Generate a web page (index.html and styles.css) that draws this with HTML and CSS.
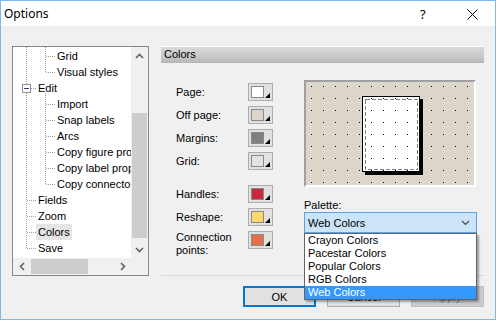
FILE: index.html
```html
<!DOCTYPE html>
<html>
<head>
<meta charset="utf-8">
<link rel="stylesheet" href="styles.css">
</head>
<body>
<div class="window">
  <div class="titlebar">
    <span class="title">Options</span>
    <span class="help">?</span>
    <span class="close"><svg width="11" height="11" viewBox="0 0 11 11"><path d="M0.5 0.5 L10.5 10.5 M10.5 0.5 L0.5 10.5" stroke="#000" stroke-width="1"/></svg></span>
  </div>
  <div class="body">
    <div class="main">
      <div class="tree">
        <div class="tree-top">
          <div class="tree-content">
            <svg class="tree-lines" width="118" height="211" viewBox="0 0 118 211" shape-rendering="crispEdges">
              <g stroke="#a0a0a0" stroke-width="1" stroke-dasharray="1 1" fill="none">
                <line x1="13.5" y1="0" x2="13.5" y2="202"/>
                <line x1="32.5" y1="0" x2="32.5" y2="26"/>
                <line x1="33" y1="9.5" x2="42" y2="9.5"/>
                <line x1="33" y1="25.5" x2="42" y2="25.5"/>
                <line x1="18" y1="41.5" x2="24" y2="41.5"/>
                <line x1="32.5" y1="46" x2="32.5" y2="138"/>
                <line x1="33" y1="57.5" x2="42" y2="57.5"/>
                <line x1="33" y1="73.5" x2="42" y2="73.5"/>
                <line x1="33" y1="89.5" x2="42" y2="89.5"/>
                <line x1="33" y1="105.5" x2="42" y2="105.5"/>
                <line x1="33" y1="121.5" x2="42" y2="121.5"/>
                <line x1="33" y1="137.5" x2="42" y2="137.5"/>
                <line x1="14" y1="153.5" x2="23" y2="153.5"/>
                <line x1="14" y1="169.5" x2="23" y2="169.5"/>
                <line x1="14" y1="185.5" x2="23" y2="185.5"/>
                <line x1="14" y1="201.5" x2="23" y2="201.5"/>
              </g>
              <rect x="9.5" y="37.5" width="8" height="8" fill="#fff" stroke="#919191"/>
              <line x1="11" y1="41.5" x2="16" y2="41.5" stroke="#2b3f8f" stroke-width="1"/>
            </svg>
            <div class="row l2"><span class="lbl">Grid</span></div>
            <div class="row l2"><span class="lbl">Visual styles</span></div>
            <div class="row l1"><span class="lbl">Edit</span></div>
            <div class="row l2"><span class="lbl">Import</span></div>
            <div class="row l2"><span class="lbl">Snap labels</span></div>
            <div class="row l2"><span class="lbl">Arcs</span></div>
            <div class="row l2"><span class="lbl">Copy figure properties</span></div>
            <div class="row l2"><span class="lbl">Copy label properties</span></div>
            <div class="row l2"><span class="lbl">Copy connector properties</span></div>
            <div class="row l1"><span class="lbl">Fields</span></div>
            <div class="row l1"><span class="lbl">Zoom</span></div>
            <div class="row l1"><span class="lbl sel">Colors</span></div>
            <div class="row l1"><span class="lbl">Save</span></div>
          </div>
          <div class="vscroll">
            <div class="sbtn"><svg width="9" height="6" viewBox="0 0 9 6"><path d="M1 5 L4.5 1.5 L8 5" stroke="#606060" stroke-width="1.6" fill="none"/></svg></div>
            <div class="vtrack"><div class="vthumb"></div></div>
            <div class="sbtn"><svg width="9" height="6" viewBox="0 0 9 6"><path d="M1 1 L4.5 4.5 L8 1" stroke="#606060" stroke-width="1.6" fill="none"/></svg></div>
          </div>
        </div>
        <div class="tree-bottom">
          <div class="hscroll">
            <div class="sbtn"><svg width="6" height="9" viewBox="0 0 6 9"><path d="M5 1 L1.5 4.5 L5 8" stroke="#606060" stroke-width="1.6" fill="none"/></svg></div>
            <div class="htrack"><div class="hthumb"></div></div>
            <div class="sbtn"><svg width="6" height="9" viewBox="0 0 6 9"><path d="M1 1 L4.5 4.5 L1 8" stroke="#606060" stroke-width="1.6" fill="none"/></svg></div>
          </div>
          <div class="corner"></div>
        </div>
      </div>
      <div class="panel">
        <div class="panel-header">Colors</div>
        <div class="panel-body">
          <div class="swatches">
            <div class="srow"><span class="slabel">Page:</span><span class="swatch"><span class="chip c-page"></span><span class="tri"></span></span></div>
            <div class="srow"><span class="slabel">Off page:</span><span class="swatch"><span class="chip c-off"></span><span class="tri"></span></span></div>
            <div class="srow"><span class="slabel">Margins:</span><span class="swatch"><span class="chip c-margins"></span><span class="tri"></span></span></div>
            <div class="srow"><span class="slabel">Grid:</span><span class="swatch"><span class="chip c-grid"></span><span class="tri"></span></span></div>
            <div class="srow group"><span class="slabel">Handles:</span><span class="swatch"><span class="chip c-handles"></span><span class="tri"></span></span></div>
            <div class="srow"><span class="slabel">Reshape:</span><span class="swatch"><span class="chip c-reshape"></span><span class="tri"></span></span></div>
            <div class="srow"><span class="slabel two">Connection<br>points:</span><span class="swatch"><span class="chip c-conn"></span><span class="tri"></span></span></div>
          </div>
          <div class="preview-col">
            <div class="preview">
              <svg width="168" height="103" viewBox="0 0 168 103" shape-rendering="crispEdges">
                <defs>
                  <pattern id="dots" width="12" height="12" patternUnits="userSpaceOnUse">
                    <rect x="5" y="4" width="1" height="1" fill="#000"/>
                  </pattern>
                </defs>
                <rect x="59" y="17" width="58" height="76" fill="#000"/>
                <rect x="56.5" y="14.5" width="57" height="75" fill="#fff" stroke="#000"/>
                <rect x="59.5" y="17.5" width="52" height="70" fill="none" stroke="#808080" stroke-dasharray="4 2"/>
                <rect x="0" y="0" width="168" height="103" fill="url(#dots)"/>
              </svg>
            </div>
            <div class="palette-label">Palette:</div>
            <div class="combo">
              <span class="combo-text">Web Colors</span>
              <svg class="chev" width="9" height="6" viewBox="0 0 9 6"><path d="M1 1 L4.5 4.5 L8 1" stroke="#444" stroke-width="1.1" fill="none"/></svg>
              <ul class="combo-list">
                <li>Crayon Colors</li>
                <li>Pacestar Colors</li>
                <li>Popular Colors</li>
                <li>RGB Colors</li>
                <li class="on">Web Colors</li>
              </ul>
            </div>
          </div>
        </div>
      </div>
    </div>
    <div class="buttons">
      <button class="btn default">OK</button>
      <button class="btn">Cancel</button>
      <button class="btn disabled">Apply</button>
    </div>
  </div>
</div>
</body>
</html>
```

FILE: styles.css
```css
* { box-sizing: border-box; }
html, body { margin: 0; padding: 0; }
body {
  width: 496px;
  height: 320px;
  overflow: hidden;
  font-family: "Liberation Sans", Arial, sans-serif;
  font-size: 11px;
  color: #000;
}
.window {
  width: 496px;
  height: 320px;
  border: 1px solid #7db8ee;
  background: #f0f0f0;
  display: flex;
  flex-direction: column;
}
.titlebar {
  height: 25px;
  background: #fff;
  display: flex;
  align-items: center;
  flex: none;
}
.title {
  font-family: "Noto Sans", sans-serif;
  font-size: 12px;
  padding-left: 3px;
  flex: 1;
}
.help {
  font-family: "Noto Sans", sans-serif;
  font-size: 13px;
  width: 12px;
  margin-right: 35px;
}
.close {
  width: 11px;
  height: 11px;
  display: flex;
  margin-right: 17px;
  margin-top: 1px;
}
.body {
  flex: 1;
  padding: 20px 11px 0 11px;
  display: flex;
  flex-direction: column;
}
.main {
  display: flex;
  gap: 12px;
  height: 230px;
}
.tree {
  width: 137px;
  height: 230px;
  border: 1px solid #828790;
  background: #fff;
  display: flex;
  flex-direction: column;
}
.tree-top {
  display: flex;
  height: 211px;
}
.tree-content {
  position: relative;
  width: 118px;
  height: 211px;
  overflow: hidden;
  padding-top: 1px;
  white-space: nowrap;
}
.tree-lines {
  position: absolute;
  left: 0;
  top: 0;
}
.row {
  position: relative;
  height: 16px;
  display: flex;
  align-items: center;
}
.row.l1 { padding-left: 23px; }
.row.l2 { padding-left: 42px; }
.lbl {
  padding: 0 2px;
  line-height: 16px;
  height: 16px;
}
.lbl.sel { background: #e5e5e5; }
.vscroll {
  width: 17px;
  height: 211px;
  background: #f0f0f0;
  display: flex;
  flex-direction: column;
}
.sbtn {
  width: 17px;
  height: 17px;
  flex: none;
  display: flex;
  align-items: center;
  justify-content: center;
}
.vtrack {
  flex: 1;
  padding-top: 49px;
}
.vthumb {
  margin-left: 1px;
  width: 15px;
  height: 125px;
  background: #cdcdcd;
}
.tree-bottom {
  display: flex;
  height: 17px;
}
.hscroll {
  width: 118px;
  height: 17px;
  background: #f0f0f0;
  display: flex;
}
.htrack {
  flex: 1;
  padding-top: 1px;
}
.hthumb {
  width: 57px;
  height: 15px;
  margin-left: 1px;
  background: #cdcdcd;
}
.corner {
  width: 17px;
  height: 17px;
  background: #f0f0f0;
}
.panel {
  flex: 1;
  height: 230px;
  border-bottom: 1px solid #d9d9d9;
  display: flex;
  flex-direction: column;
}
.panel-header {
  height: 17px;
  border-top: 1px solid #fff;
  background: linear-gradient(#dadada, #c4c4c4 70%, #b6b6b6);
  padding-left: 3px;
  line-height: 15px;
}
.panel-body {
  display: flex;
  padding-left: 15px;
  align-items: flex-start;
}
.swatches {
  padding-top: 20px;
  display: flex;
  flex-direction: column;
  gap: 5px;
}
.srow {
  display: flex;
  align-items: flex-start;
  height: 18px;
}
.srow.group { margin-top: 10px; }
.slabel {
  width: 72px;
  line-height: 18px;
}
.slabel.two { line-height: 13px; }
.swatch {
  position: relative;
  width: 25px;
  height: 18px;
  border: 1px solid #adadad;
  background: #e1e1e1;
  padding: 2px 0 0 2px;
}
.chip {
  display: block;
  width: 13px;
  height: 12px;
  border: 1px solid #8a8a8a;
}
.c-page { background: #fff; }
.c-off { background: #ddd6cb; }
.c-margins { background: #7f7f7f; }
.c-grid { background: #e3e3e3; }
.c-handles { background: #c9283d; }
.c-reshape { background: #fcd86c; }
.c-conn { background: #e2704a; }
.tri {
  position: absolute;
  right: 2px;
  bottom: 2px;
  width: 0;
  height: 0;
  border-left: 5px solid transparent;
  border-bottom: 5px solid #000;
}
.preview-col {
  margin-left: 31px;
  margin-top: 17px;
  width: 173px;
  display: flex;
  flex-direction: column;
}
.preview {
  width: 172px;
  height: 107px;
  border: 2px solid;
  border-color: #a0a0a0 #fff #fff #a0a0a0;
  background: #ddd6cb;
}
.preview svg { display: block; }
.palette-label {
  margin-top: 12px;
  line-height: 13px;
  height: 13px;
}
.combo {
  position: relative;
  width: 173px;
  height: 21px;
  border: 1px solid #5ea2e6;
  background: #cce4f7;
  display: flex;
  align-items: center;
  padding-left: 3px;
}
.combo-text { flex: 1; }
.chev { margin-right: 6px; }
.combo-list {
  position: absolute;
  left: -1px;
  top: 20px;
  width: 173px;
  margin: 0;
  padding: 0;
  list-style: none;
  background: #fff;
  border: 1px solid #646464;
  box-shadow: 2px 2px 2px rgba(0, 0, 0, 0.35);
  z-index: 5;
}
.combo-list li {
  height: 13px;
  line-height: 13px;
  padding-left: 3px;
}
.combo-list li.on {
  background: #3399ff;
  color: #fff;
}
.buttons {
  margin-top: 10px;
  display: flex;
  justify-content: flex-end;
  gap: 11px;
}
.btn {
  width: 73px;
  height: 21px;
  font-family: "Liberation Sans", Arial, sans-serif;
  font-size: 11px;
  color: #000;
  background: #e1e1e1;
  border: 1px solid #adadad;
  padding: 0;
}
.btn.default { border: 2px solid #0078d7; }
.btn.disabled {
  background: #cccccc;
  border-color: #bfbfbf;
  color: #838383;
}
```
